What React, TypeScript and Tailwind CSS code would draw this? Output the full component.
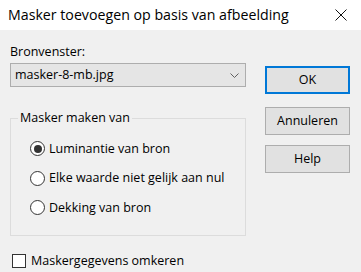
import React, { useState } from 'react';

const font = { fontFamily: '"Open Sans", "Noto Sans", Arial, sans-serif' };

const Radio: React.FC<{ label: string; checked: boolean; onSelect: () => void }> = ({ label, checked, onSelect }) => (
  <div className="flex h-[29.5px] items-center cursor-default" onClick={onSelect}>
    <span className="flex h-[15px] w-[15px] items-center justify-center rounded-full border border-[#333333] bg-white">
      {checked && <span className="h-[8px] w-[8px] rounded-full bg-[#333333]" />}
    </span>
    <span className="ml-[4px] text-[12.5px] leading-[16px] text-black">{label}</span>
  </div>
);

const App: React.FC = () => {
  const [mode, setMode] = useState(0);
  const [invert, setInvert] = useState(false);
  const options = ['Luminantie van bron', 'Elke waarde niet gelijk aan nul', 'Dekking van bron'];

  return (
    <div className="h-[272px] w-[361px] overflow-hidden bg-[#f0f0f0]" style={font}>
      {/* Title bar */}
      <div className="flex h-[30px] items-center justify-between bg-white pl-[8px] pr-[14px]">
        <span className="text-[14.2px] leading-[20px] text-black">Masker toevoegen op basis van afbeelding</span>
        <svg width="12" height="12" viewBox="0 0 12 12">
          <path d="M0.5 0.5 L11.5 11.5 M11.5 0.5 L0.5 11.5" stroke="#111" strokeWidth="1" />
        </svg>
      </div>

      <div className="flex">
        {/* Left column */}
        <div className="w-[236px] ml-[10px]">
          <div className="mt-[14px] text-[12.5px] leading-[16px] text-black">Bronvenster:</div>
          <div className="mt-[3px] flex h-[24px] items-center justify-between border border-[#adadad] bg-[#e5e5e5] pl-[4px] pr-[6px]">
            <span className="text-[12.5px] leading-[16px] text-black">masker-8-mb.jpg</span>
            <svg width="9" height="5" viewBox="0 0 9 5">
              <path d="M0.5 0.5 L4.5 4.5 L8.5 0.5" stroke="#606060" strokeWidth="1" fill="none" />
            </svg>
          </div>

          <fieldset className="mt-[23px] h-[126px] border border-[#dcdcdc] pl-[7px]">
            <legend className="px-[2px] text-[12.5px] leading-[16px] text-black">Masker maken van</legend>
            <div className="ml-[12px] mt-[8px] flex flex-col">
              {options.map((o, i) => (
                <Radio key={o} label={o} checked={mode === i} onSelect={() => setMode(i)} />
              ))}
            </div>
          </fieldset>

          <div className="mt-[17px] flex items-center ml-[2px] cursor-default" onClick={() => setInvert(!invert)}>
            <span className="flex h-[14px] w-[14px] items-center justify-center border border-[#333333] bg-white text-[10px]">
              {invert ? '✓' : ''}
            </span>
            <span className="ml-[5px] text-[12.5px] leading-[16px] text-black">Maskergegevens omkeren</span>
          </div>
        </div>

        {/* Buttons */}
        <div className="ml-[19px] flex w-[85px] flex-col">
          <button className="mt-[36px] h-[28px] border-2 border-[#0078d7] bg-[#e1e1e1] text-[12.5px] text-black">OK</button>
          <button className="mt-[13px] h-[28px] border border-[#adadad] bg-[#e1e1e1] text-[12.5px] text-black">Annuleren</button>
          <button className="mt-[10px] h-[28px] border border-[#adadad] bg-[#e1e1e1] text-[12.5px] text-black">Help</button>
        </div>
      </div>
    </div>
  );
};

export default App;
